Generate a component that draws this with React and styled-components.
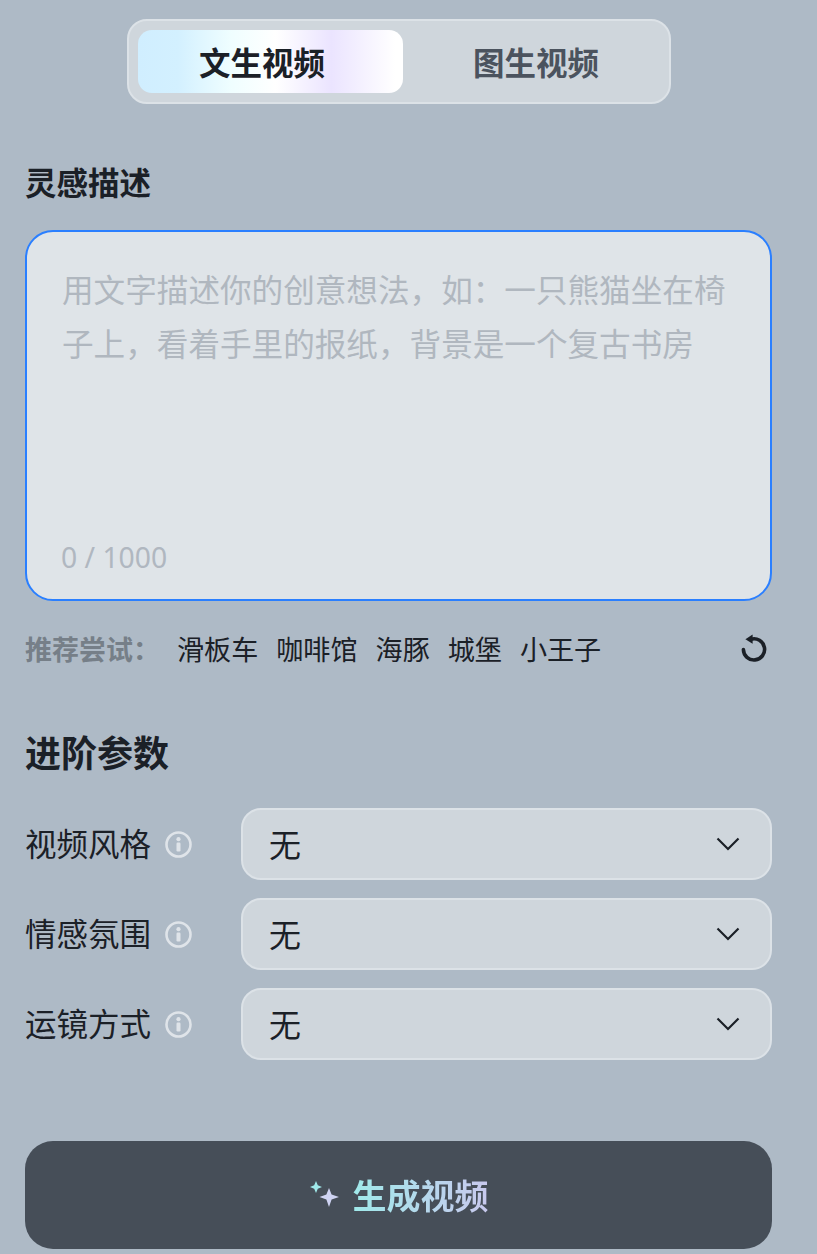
import React from 'react'
import styled, { createGlobalStyle } from 'styled-components'

const Global = createGlobalStyle`
  html, body { margin: 0; padding: 0; background: #aebac6; }
  body { font-family: "Noto Sans CJK SC", "Noto Sans", sans-serif; color: #1b2027; }
  * { box-sizing: border-box; }
`

const Page = styled.div`
  width: 817px;
  height: 1254px;
  overflow: hidden;
  padding: 19px 45px 0 25px;
  background: #aebac6;
`

const Tabs = styled.div`
  display: flex;
  width: 544px;
  height: 85px;
  margin-left: 102px;
  padding: 9px 0 9px 9px;
  border: 2px solid #dce2e7;
  border-radius: 20px;
  background: #cfd6dc;
`

const Tab = styled.div`
  flex: ${p => (p.$active ? '0 0 265px' : '1')};
  display: flex;
  align-items: center;
  justify-content: center;
  height: 63px;
  padding: ${p => (p.$active ? '0 17px 2px 0' : '0 0 2px')};
  border-radius: 14px;
  font-size: 31.5px;
  font-weight: 700;
  color: ${p => (p.$active ? '#1b2027' : '#4b535e')};
  background: ${p => (p.$active
    ? 'linear-gradient(90deg, #d0eeff 0%, #d3f0ff 15%, #effeff 35%, #ffffff 52%, #ebe4ff 73%, #ffffff 97%)'
    : 'transparent')};
`

const Title = styled.div`
  margin-top: 54px;
  height: 46px;
  line-height: 46px;
  font-size: 31.5px;
  font-weight: 700;
`

const Prompt = styled.div`
  position: relative;
  height: 371px;
  margin-top: 26px;
  padding: 29px 20px 0 35px;
  border: 2px solid #2a7fff;
  border-radius: 28px;
  background: #dfe4e8;
  font-size: 31.6px;
  line-height: 54px;
  color: #b0b7bf;
`

const Counter = styled.div`
  position: absolute;
  left: 34px;
  bottom: 22px;
  font-family: "Noto Sans", sans-serif;
  font-size: 28.3px;
  line-height: 40px;
  color: #b0b7c0;
`

const Suggest = styled.div`
  display: flex;
  align-items: center;
  height: 40px;
  margin-top: 27px;
  padding-right: 4px;
`

const SuggestLabel = styled.span`
  width: 152px;
  font-size: 27px;
  font-weight: 700;
  color: #767f88;
`

const Chips = styled.div`
  display: flex;
  flex: 1;
  gap: 18px;
`

const Chip = styled.span`
  font-size: 27.1px;
  color: #1b2027;
`

const Heading = styled.div`
  margin-top: 57px;
  height: 52px;
  line-height: 52px;
  font-size: 36px;
  font-weight: 700;
`

const Params = styled.div`
  display: flex;
  flex-direction: column;
  gap: 18px;
  margin-top: 31px;
`

const Row = styled.div`
  display: flex;
  align-items: center;
  height: 72px;
`

const RowLabel = styled.div`
  display: flex;
  align-items: center;
  gap: 14px;
  width: 216px;
  font-size: 31.5px;
`

const RowLabelText = styled.span`
  margin-bottom: 5px;
`

const Select = styled.div`
  flex: 1;
  display: flex;
  align-items: center;
  justify-content: space-between;
  height: 72px;
  padding: 0 30px 2px 26px;
  border: 2px solid #dce2e7;
  border-radius: 20px;
  background: #cfd6dc;
  font-size: 32px;
`

const SelectArrow = styled.svg`
  margin-top: 2px;
`

const Generate = styled.div`
  display: flex;
  align-items: center;
  justify-content: center;
  gap: 12px;
  height: 108px;
  margin-top: 81px;
  border-radius: 28px;
  background: #464e58;
`

const GenerateText = styled.span`
  margin-bottom: 2px;
  font-size: 34px;
  font-weight: 700;
  color: transparent;
  background: linear-gradient(90deg, #a0e9ea 0%, #c9c9ee 100%);
  -webkit-background-clip: text;
  background-clip: text;
`

const Info = () => (
  <svg width="27" height="27" viewBox="0 0 27 27" fill="none">
    <circle cx="13.5" cy="13.5" r="12" stroke="#dfe4e9" strokeWidth="2.6" />
    <circle cx="13.5" cy="8.2" r="2.1" fill="#dfe4e9" />
    <rect x="11.5" y="11.5" width="4" height="9" rx="1.2" fill="#dfe4e9" />
  </svg>
)

const Chevron = () => (
  <SelectArrow width="24" height="14" viewBox="0 0 24 14" fill="none">
    <path d="M1.5 1.5 L12 12 L22.5 1.5" stroke="#1b2027" strokeWidth="2.2" />
  </SelectArrow>
)

const Refresh = () => (
  <svg width="28" height="28" viewBox="0 0 28 28" fill="none">
    <path d="M11 5.2 A10.6 10.6 0 1 1 3.4 15.5" stroke="#1b2027" strokeWidth="3.6" strokeLinecap="round" />
    <path d="M12.6 0.6 L12.6 9.8 L5.4 5.2 Z" fill="#1b2027" />
  </svg>
)

const Sparkle = () => (
  <svg width="32" height="30" viewBox="0 0 32 30">
    <path d="M7 1 L8.8 5.2 L13 7 L8.8 8.8 L7 13 L5.2 8.8 L1 7 L5.2 5.2 Z" fill="#a0e9ea" />
    <path d="M20 8 L22.6 14.4 L30 17 L22.6 19.6 L20 27 L17.4 19.6 L10.5 17 L17.4 14.4 Z" fill="#cfd3f2" />
  </svg>
)

const params = ['视频风格', '情感氛围', '运镜方式']
const chips = ['滑板车', '咖啡馆', '海豚', '城堡', '小王子']

export default function App() {
  return (
    <Page>
      <Global />
      <Tabs>
        <Tab $active>文生视频</Tab>
        <Tab>图生视频</Tab>
      </Tabs>
      <Title>灵感描述</Title>
      <Prompt>
        用文字描述你的创意想法，如：一只熊猫坐在椅子上，看着手里的报纸，背景是一个复古书房
        <Counter>0 / 1000</Counter>
      </Prompt>
      <Suggest>
        <SuggestLabel>推荐尝试：</SuggestLabel>
        <Chips>
          {chips.map(c => <Chip key={c}>{c}</Chip>)}
        </Chips>
        <Refresh />
      </Suggest>
      <Heading>进阶参数</Heading>
      <Params>
        {params.map(p => (
          <Row key={p}>
            <RowLabel><RowLabelText>{p}</RowLabelText><Info /></RowLabel>
            <Select>无<Chevron /></Select>
          </Row>
        ))}
      </Params>
      <Generate>
        <Sparkle />
        <GenerateText>生成视频</GenerateText>
      </Generate>
    </Page>
  )
}
